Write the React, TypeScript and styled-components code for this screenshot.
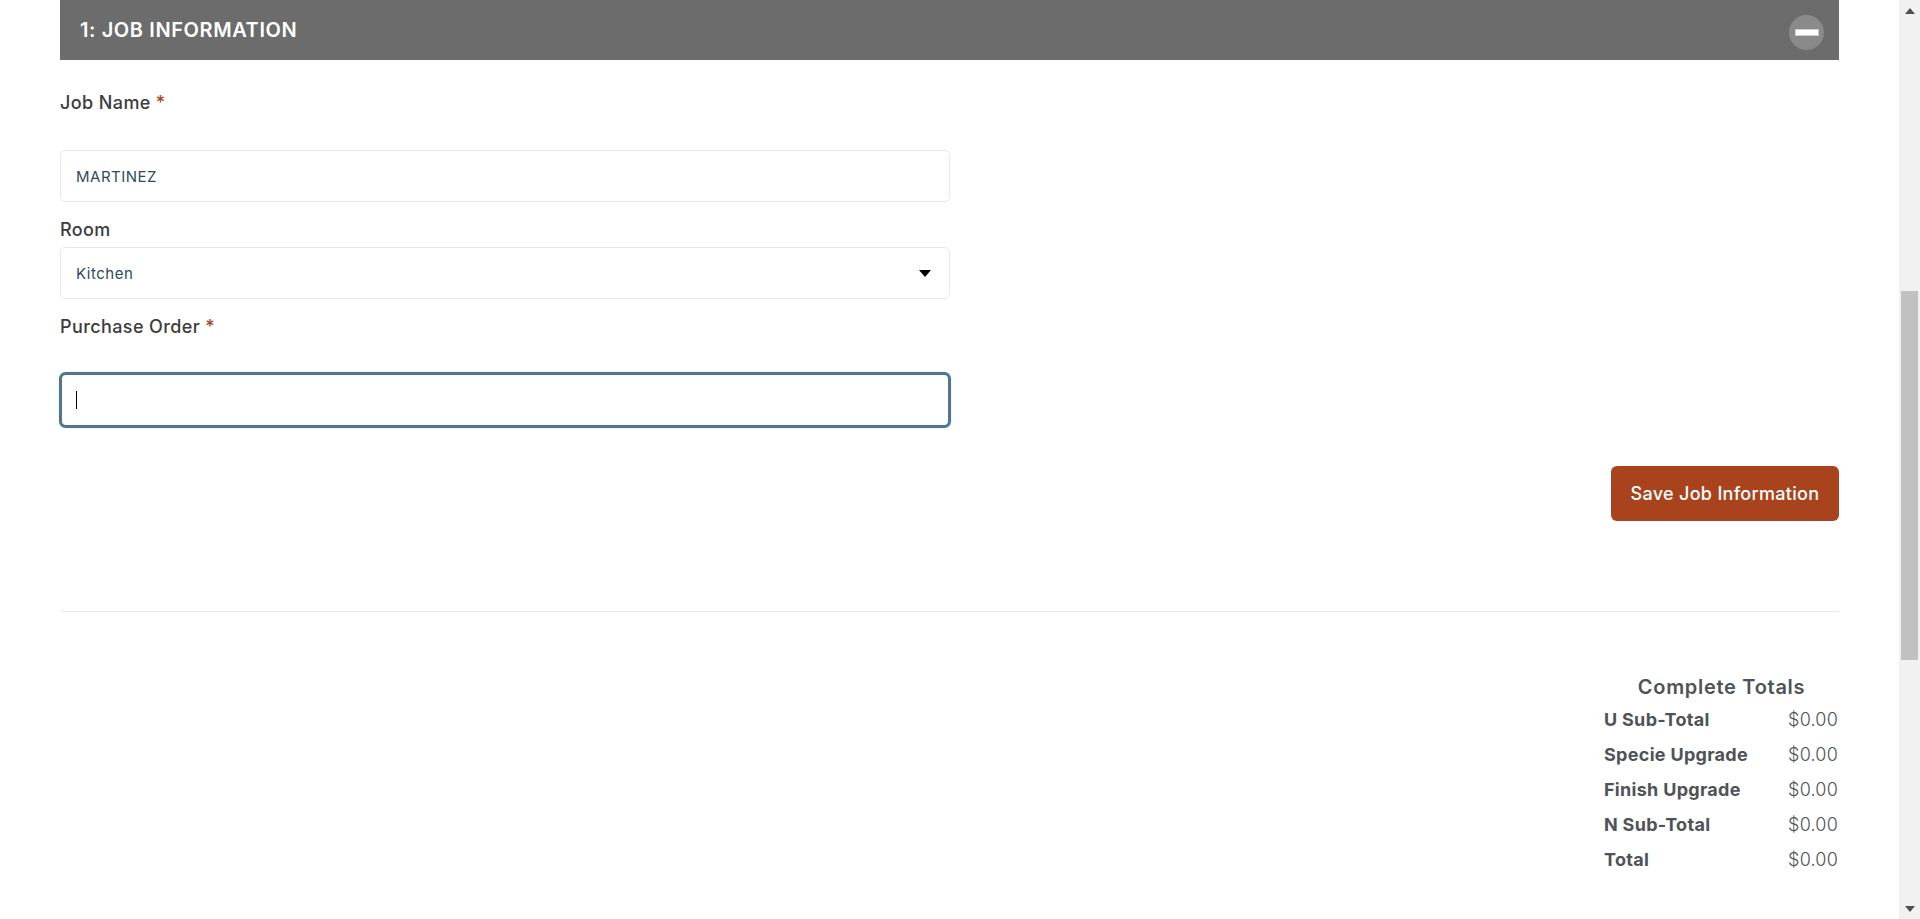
import React from "react";
import styled, { createGlobalStyle } from "styled-components";

const FONT = `"Inter", "Liberation Sans", sans-serif`;

const totals = [
  { label: "U Sub-Total", value: "$0.00" },
  { label: "Specie Upgrade", value: "$0.00" },
  { label: "Finish Upgrade", value: "$0.00" },
  { label: "N Sub-Total", value: "$0.00" },
  { label: "Total", value: "$0.00" },
];

const App: React.FC = () => {
  return (
    <Page>
      <GlobalStyle />
      <Main>
        <SectionHeader>
          <SectionTitle>1: JOB INFORMATION</SectionTitle>
          <CollapseButton type="button" aria-label="Collapse">
            <MinusBar />
          </CollapseButton>
        </SectionHeader>

        <FormColumn>
          <Label $gap={36}>
            Job Name<Required>*</Required>
          </Label>
          <TextInput defaultValue="MARTINEZ" />

          <Label $gap={6} $top={17}>
            Room
          </Label>
          <SelectWrap>
            <RoomSelect defaultValue="Kitchen">
              <option>Kitchen</option>
              <option>Bathroom</option>
            </RoomSelect>
            <SelectArrow width="12" height="7" viewBox="0 0 12 7">
              <path d="M0 0h12L6 7z" fill="#000" />
            </SelectArrow>
          </SelectWrap>

          <Label $gap={36} $top={17}>
            Purchase Order<Required>*</Required>
          </Label>
          <FocusWrap>
            <FocusInput />
            <Caret />
          </FocusWrap>
        </FormColumn>

        <ButtonRow>
          <SaveButton type="button">Save Job Information</SaveButton>
        </ButtonRow>

        <Divider />

        <TotalsRow>
          <TotalsBox>
            <TotalsTitle>Complete Totals</TotalsTitle>
            {totals.map((row) => (
              <TotalLine key={row.label}>
                <TotalLabel>{row.label}</TotalLabel>
                <TotalValue>{row.value}</TotalValue>
              </TotalLine>
            ))}
          </TotalsBox>
        </TotalsRow>
      </Main>

      <Scrollbar>
        <ScrollArrow>
          <svg width="10" height="6" viewBox="0 0 10 6">
            <path d="M0 6L5 0l5 6z" fill="#505050" />
          </svg>
        </ScrollArrow>
        <ScrollTrack>
          <ScrollThumb />
        </ScrollTrack>
        <ScrollArrow>
          <svg width="10" height="6" viewBox="0 0 10 6">
            <path d="M0 0h10L5 6z" fill="#505050" />
          </svg>
        </ScrollArrow>
      </Scrollbar>
    </Page>
  );
};

export default App;

const GlobalStyle = createGlobalStyle`
  html, body {
    margin: 0;
    height: 100%;
    overflow: hidden;
    background: #fff;
  }
  * {
    box-sizing: border-box;
  }
`;

const Page = styled.div`
  display: flex;
  height: 919px;
  font-family: ${FONT};
`;

const Main = styled.main`
  flex: 1;
  min-width: 0;
  padding: 0 60px;
`;

const SectionHeader = styled.div`
  height: 60px;
  background: #6c6c6c;
  padding: 0 15px 0 20px;
  display: flex;
  align-items: center;
  justify-content: space-between;
`;

const SectionTitle = styled.h2`
  margin: 0;
  font-size: 20px;
  font-weight: 600;
  letter-spacing: 0.6px;
  color: #fff;
`;

const CollapseButton = styled.button`
  width: 35px;
  height: 35px;
  margin-top: 4px;
  padding: 0;
  border: 0;
  border-radius: 50%;
  background: #8a8a8a;
  display: flex;
  align-items: center;
  justify-content: center;
`;

const MinusBar = styled.span`
  width: 24px;
  height: 7px;
  background: #fff;
  border: 1px solid #d0d0d0;
`;

const FormColumn = styled.div`
  width: 890px;
  padding-top: 32px;
`;

const Label = styled.label<{ $gap: number; $top?: number }>`
  display: block;
  margin-top: ${(p) => p.$top ?? 0}px;
  margin-bottom: ${(p) => p.$gap}px;
  font-size: 18px;
  line-height: 22px;
  font-weight: 500;
  letter-spacing: 0.4px;
  color: #3c3c3c;
`;

const Required = styled.span`
  margin-left: 5px;
  color: #a9431e;
`;

const TextInput = styled.input`
  display: block;
  width: 100%;
  height: 52px;
  padding: 0 15px;
  border: 1px solid #e8e8e8;
  border-radius: 5px;
  background: #fff;
  font-family: ${FONT};
  font-size: 15px;
  letter-spacing: 0.5px;
  color: #2f4a63;
  outline: none;
`;

const SelectWrap = styled.div`
  position: relative;
`;

const RoomSelect = styled.select`
  display: block;
  width: 100%;
  height: 52px;
  padding: 0 15px;
  border: 1px solid #e8e8e8;
  border-radius: 5px;
  background: #fff;
  appearance: none;
  font-family: ${FONT};
  font-size: 15px;
  letter-spacing: 0.5px;
  color: #2f4a63;
  outline: none;
`;

const SelectArrow = styled.svg`
  position: absolute;
  right: 19px;
  top: 23px;
  pointer-events: none;
`;

const FocusWrap = styled.div`
  position: relative;
  margin: -2px -1px 0;
`;

const FocusInput = styled.input`
  display: block;
  width: 100%;
  height: 56px;
  padding: 0 15px;
  border: 3px solid #527592;
  border-radius: 7px;
  background: #fff;
  box-shadow: 0 0 1px 0 rgba(82, 117, 146, 0.7);
  outline: none;
  caret-color: transparent;
`;

const Caret = styled.span`
  position: absolute;
  left: 17px;
  top: 19px;
  width: 1px;
  height: 18px;
  background: #000;
`;

const ButtonRow = styled.div`
  display: flex;
  justify-content: flex-end;
  margin-top: 38px;
`;

const SaveButton = styled.button`
  width: 228px;
  height: 55px;
  padding: 0;
  border: 0;
  border-radius: 6px;
  background: #a9431e;
  color: #fff;
  font-family: ${FONT};
  font-size: 18px;
  font-weight: 500;
  letter-spacing: 0.3px;
`;

const Divider = styled.hr`
  margin: 90px 0 0;
  border: 0;
  border-top: 1px solid #e8e8e8;
`;

const TotalsRow = styled.div`
  display: flex;
  justify-content: flex-end;
  padding-top: 61px;
`;

const TotalsBox = styled.div`
  width: 235px;
`;

const TotalsTitle = styled.h3`
  margin: 0 0 1px;
  font-size: 20px;
  line-height: 28px;
  font-weight: 600;
  letter-spacing: 0.7px;
  text-align: center;
  color: #4f5357;
`;

const TotalLine = styled.div`
  display: flex;
  justify-content: space-between;
  align-items: center;
  height: 35px;
  padding-right: 1px;
`;

const TotalLabel = styled.span`
  font-size: 18px;
  font-weight: 700;
  letter-spacing: 0.3px;
  color: #4f5357;
`;

const TotalValue = styled.span`
  font-size: 18px;
  font-weight: 300;
  letter-spacing: 0.2px;
  color: #4f5357;
`;

const Scrollbar = styled.aside`
  width: 21px;
  height: 919px;
  background: #f1f1f1;
  display: flex;
  flex-direction: column;
`;

const ScrollArrow = styled.div`
  height: 21px;
  flex: none;
  display: flex;
  align-items: center;
  justify-content: center;
`;

const ScrollTrack = styled.div`
  flex: 1;
  padding: 270px 2px 0;
`;

const ScrollThumb = styled.div`
  height: 369px;
  background: #c1c1c1;
`;
